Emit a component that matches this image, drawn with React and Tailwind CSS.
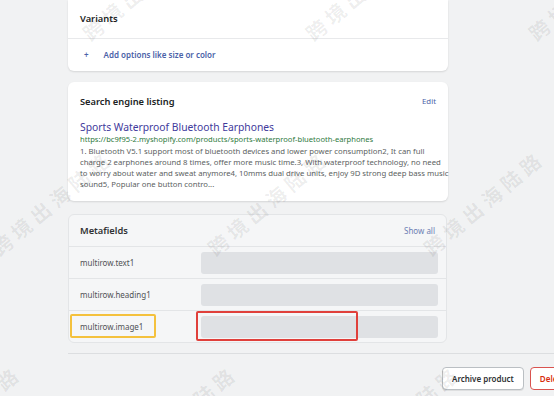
import React from 'react';

const watermarks = [
  { x: 143, y: -12 },
  { x: 366, y: -12 },
  { x: 589, y: -12 },
  { x: 52, y: 203 },
  { x: 268, y: 203 },
  { x: 484, y: 203 },
  { x: -39, y: 418 },
  { x: 177, y: 418 },
  { x: 400, y: 418 },
];

const metafields = ['multirow.text1', 'multirow.heading1', 'multirow.image1'];

const App = () => {
  return (
    <div className="relative w-[554px] h-[396px] overflow-hidden bg-[#f1f2f3] font-['Noto_Sans',sans-serif] text-[#202223]">
      <div className="flex flex-col pl-[68px]">
        {/* Variants */}
        <div className="w-[380px] bg-white rounded-b-[6px] shadow-[0_1px_2px_rgba(0,0,0,0.12)]">
          <div className="h-[38px] flex items-center px-[12px] text-[9.3px] font-semibold">Variants</div>
          <div className="h-[33px] border-t border-[#e8e9eb] flex items-center pl-[16px] gap-[15px] text-[8px] font-semibold text-[#4b62a8]">
            <span>+</span>
            <span>Add options like size or color</span>
          </div>
        </div>

        {/* Search engine listing */}
        <div className="w-[380px] mt-[11px] bg-white rounded-[6px] shadow-[0_1px_2px_rgba(0,0,0,0.12)] pt-[12px] px-[12px] pb-[11px]">
          <div className="h-[16px] flex items-center justify-between">
            <span className="text-[9.3px] font-semibold">Search engine listing</span>
            <span className="text-[7.8px] text-[#4b62a8]">Edit</span>
          </div>
          <div className="mt-[10px] text-[10.3px] leading-[14px] text-[#3f3a9c] whitespace-nowrap">Sports Waterproof Bluetooth Earphones</div>
          <div className="text-[7.6px] leading-[11px] text-[#2f7a3e] whitespace-nowrap">https://bc9f95-2.myshopify.com/products/sports-waterproof-bluetooth-earphones</div>
          <div className="mt-[1px] text-[7.75px] leading-[11px] text-[#5c5f62] whitespace-nowrap">
            <div>1. Bluetooth V5.1 support most of bluetooth devices and lower power consumption2, It can full</div>
            <div>charge 2 earphones around 8 times, offer more music time.3, With waterproof technology, no need</div>
            <div>to worry about water and sweat anymore4, 10mms dual drive units, enjoy 9D strong deep bass music</div>
            <div>sound5, Popular one button contro...</div>
          </div>
        </div>

        {/* Metafields */}
        <div className="w-[379px] mt-[13px] bg-[#f5f6f7] border border-[#e3e5e7] rounded-[6px]">
          <div className="h-[31px] flex items-center justify-between pl-[11px] pr-[11px]">
            <span className="text-[9.3px] font-semibold text-[#303234]">Metafields</span>
            <span className="text-[8px] text-[#6d7fb4]">Show all</span>
          </div>
          {metafields.map((name, i) => (
            <div key={name} className="relative h-[32px] border-t border-[#e3e5e7] flex items-center">
              <div className="w-[132px] pl-[11px] text-[8px] text-[#505255]">{name}</div>
              <div className="flex-1 mr-[8px] h-[22px] rounded-[3px] bg-[#dfe1e4]" />
              {i === 2 && (
                <>
                  <div className="absolute left-[1px] top-[3px] w-[86px] h-[24px] border-2 border-[#f4c13d] rounded-[2px]" />
                  <div className="absolute left-[127px] top-0 w-[162px] h-[30px] border-2 border-[#e0403b] rounded-[2px]" />
                </>
              )}
            </div>
          ))}
        </div>

        <div className="mt-[10px] h-px bg-[#dcdee0]" />

        <div className="mt-[13px] flex gap-[6px] pl-[374px] whitespace-nowrap">
          <button className="h-[23px] px-[9px] border border-[#babfc3] rounded-[4px] bg-white shadow-[0_1px_0_rgba(0,0,0,0.08)] text-[8px] font-semibold text-[#303234]">
            Archive product
          </button>
          <button className="h-[23px] px-[9px] border border-[#d9534f] rounded-[4px] bg-white text-[8px] font-semibold text-[#d72c0d]">
            Delete product
          </button>
        </div>
      </div>

      {/* watermark overlay */}
      {watermarks.map((w, i) => (
        <span
          key={i}
          className="absolute pointer-events-none select-none w-[150px] text-center text-[20px] leading-[24px] font-bold tracking-[5px] text-black/[0.07] rotate-[-40deg] whitespace-nowrap font-['Noto_Sans_CJK_SC',sans-serif]"
          style={{ left: w.x - 75, top: w.y - 12 }}
        >
          跨境出海陆路
        </span>
      ))}
    </div>
  );
};

export default App;
